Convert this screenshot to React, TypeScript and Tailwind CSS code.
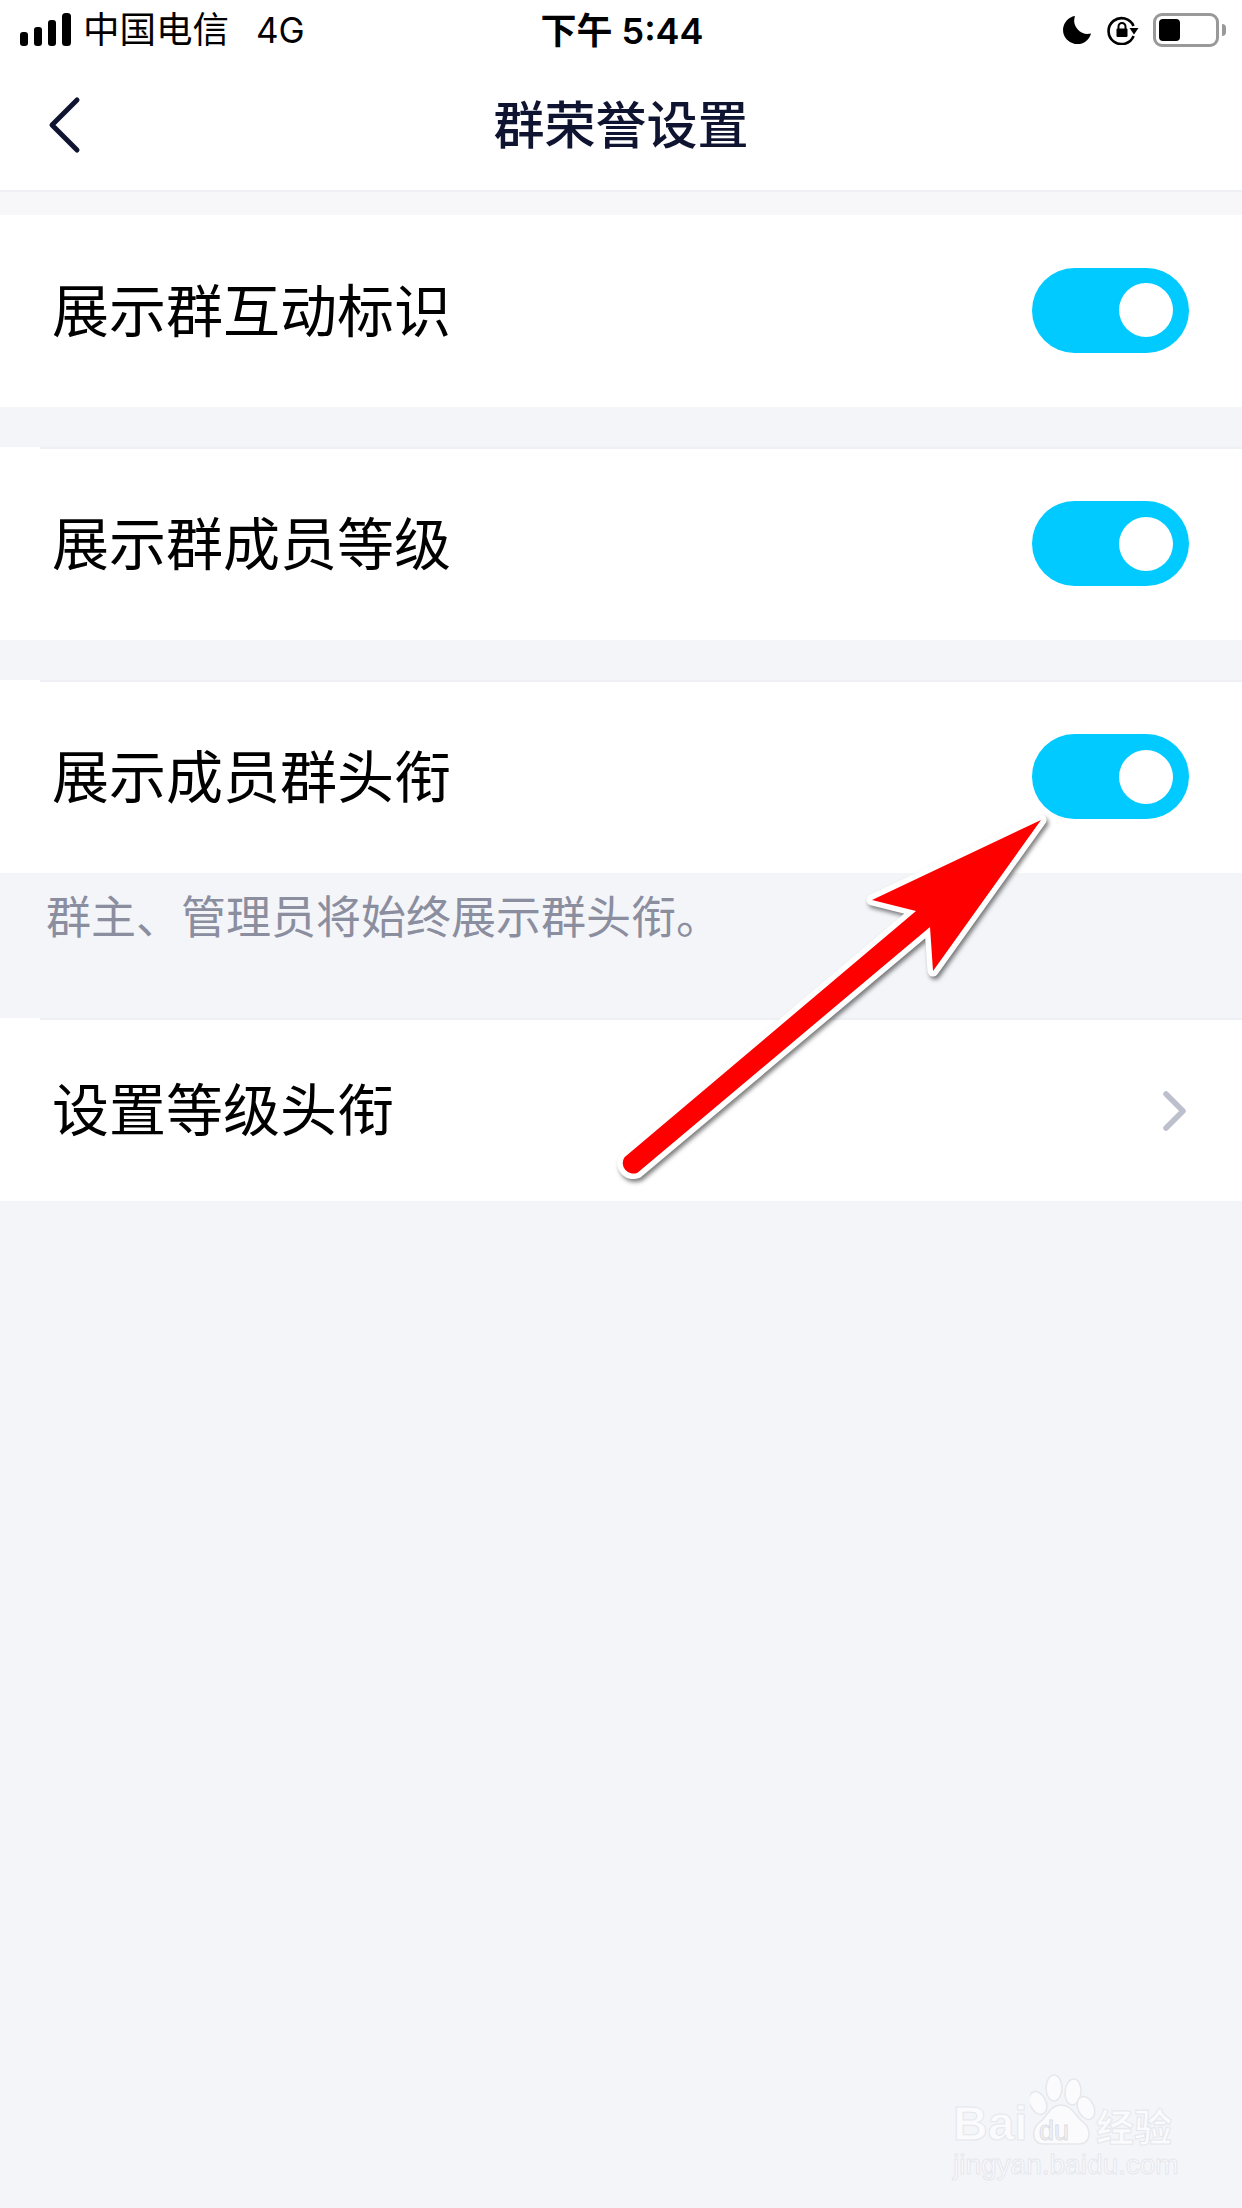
const fontStack = "font-['Inter','Noto_Sans_CJK_SC',sans-serif]";

const Toggle = () => (
  <div className="w-[157px] h-[85px] mb-[2px] rounded-full bg-[#00caff] flex items-center justify-end pr-[16px] shrink-0">
    <div className="w-[54px] h-[54px] rounded-full bg-white" />
  </div>
);

const Divider = () => <div className="ml-10 h-[2px] bg-[#eef0f6]" />;

const SignalBars = () => (
  <svg width="52" height="34" viewBox="0 0 52 34" className="shrink-0">
    <rect x="0" y="19" width="8" height="14" rx="3" fill="#000" />
    <rect x="14" y="14" width="8" height="19" rx="3" fill="#000" />
    <rect x="28" y="7" width="8" height="26" rx="3" fill="#000" />
    <rect x="42" y="0" width="9" height="33" rx="3.5" fill="#000" />
  </svg>
);

const Moon = () => (
  <svg width="28" height="28" viewBox="0 0 28 28">
    <path d="M12 0 A14.2 14.2 0 1 0 28 17.5 A13.5 13.5 0 0 1 12 0Z" fill="#000" />
  </svg>
);

const RotationLock = () => (
  <svg width="32" height="30" viewBox="0 0 32 30">
    <path d="M26.5 11 A13 13 0 1 0 26.6 21" fill="none" stroke="#000" strokeWidth="2.6" />
    <path d="M22.5 13 L31.5 13 L27 19.5Z" fill="#000" />
    <rect x="9.5" y="13.5" width="11" height="8.5" rx="1" fill="#000" />
    <path d="M11.5 14 V11.5 A3.5 3.5 0 0 1 18.5 11.5 V14" fill="none" stroke="#000" strokeWidth="2" />
  </svg>
);

const Battery = () => (
  <div className="flex items-center gap-[3px]">
    <div className="w-[66px] h-[34px] rounded-[9px] border-[3px] border-[#999999] p-[3px] flex">
      <div className="w-[21px] h-full rounded-[4px] bg-black" />
    </div>
    <div className="w-[4px] h-[12px] rounded-r-full bg-[#999999]" />
  </div>
);

const StatusBar = () => (
  <div className="h-[60px] pl-[20px] pr-[16px] grid grid-cols-[1fr_auto_1fr] items-center">
    <div className="flex items-center">
      <SignalBars />
      <span className="ml-[11px] text-[36.5px] leading-none text-black">中国电信</span>
      <span className="ml-[27px] text-[35px] leading-none text-black">4G</span>
    </div>
    <div className="pt-[2px] pr-[2px] text-[36px] leading-none font-semibold text-black">下午 5:44</div>
    <div className="flex items-center justify-end gap-[16px]">
      <Moon />
      <RotationLock />
      <div className="ml-[-2px]">
        <Battery />
      </div>
    </div>
  </div>
);

const NavBar = () => (
  <div className="h-[132px] relative flex items-center justify-center border-b-2 border-[#eef0f6]">
    <svg width="40" height="62" viewBox="0 0 40 62" className="absolute left-[42px] top-[34px]">
      <path d="M35 6 L10 31 L35 56" fill="none" stroke="#0f1430" strokeWidth="5" strokeLinecap="round" strokeLinejoin="round" />
    </svg>
    <h1 className="text-[51px] leading-none font-medium text-[#0f1430]">群荣誉设置</h1>
  </div>
);

const SettingRow = ({ label, top }: { label: string; top?: boolean }) => (
  <div className="bg-white">
    {top && <Divider />}
    <div className={`${top ? "h-[191px]" : "h-[192px]"} pl-[52px] pr-[53px] flex items-center justify-between`}>
      <span className="text-[57px] leading-none text-black">{label}</span>
      <Toggle />
    </div>
  </div>
);

const RedArrow = () => (
  <svg
    width="470"
    height="410"
    viewBox="600 790 470 410"
    className="absolute left-[600px] top-[790px] drop-shadow-[2px_3px_2px_rgba(0,0,0,0.5)]"
  >
    <path
      d="M1041 820 L872 900 L916 911 L624.5 1157.3 A10.5 10.5 0 0 0 637.5 1172.7 L930 927 L933 971 Z"
      fill="#ff0000"
      stroke="#ffffff"
      strokeWidth="11"
      strokeLinejoin="round"
      paintOrder="stroke"
    />
  </svg>
);

const Watermark = () => (
  <div className="absolute left-[950px] top-[2070px] w-[230px] h-[115px]">
    <svg width="70" height="80" viewBox="1030 2070 70 80" className="absolute left-[80px] top-0">
      <g fill="#fbfbfd" stroke="#e6e7ec" strokeWidth="1.5">
        <ellipse cx="1038" cy="2103" rx="8" ry="12" transform="rotate(-25 1038 2103)" />
        <ellipse cx="1054" cy="2088" rx="8" ry="13" />
        <ellipse cx="1073" cy="2092" rx="8" ry="13" transform="rotate(5 1073 2092)" />
        <ellipse cx="1086" cy="2108" rx="8" ry="12" transform="rotate(-25 1086 2108)" />
        <path d="M1061 2105 C1072 2105 1076 2117 1083 2122 C1092 2129 1091 2144 1079 2144 L1044 2144 C1031 2144 1031 2129 1040 2122 C1047 2117 1050 2105 1061 2105Z" />
      </g>
    </svg>
    <span className="absolute left-[3px] top-[26px] text-[48px] leading-[56px] font-bold font-['Liberation_Sans',sans-serif] text-[#fbfbfd] [-webkit-text-stroke:1px_#e6e7ec]">
      Bai
    </span>
    <span className="absolute left-[89px] top-[46px] text-[27px] leading-[30px] font-['Liberation_Sans',sans-serif] text-[#f4f5f9] [-webkit-text-stroke:1px_#dcdde3]">
      du
    </span>
    <span className="absolute left-[146px] top-[32px] text-[38px] leading-[50px] font-bold text-[#fbfbfd] [-webkit-text-stroke:1px_#e6e7ec]">
      经验
    </span>
    <span className="absolute left-[3px] top-[78px] text-[28px] leading-[34px] font-['Liberation_Sans',sans-serif] text-[#fbfbfd] [-webkit-text-stroke:1px_#e6e7ec]">
      jingyan.baidu.com
    </span>
  </div>
);

const App = () => {
  return (
    <div className={`relative w-[1242px] min-h-[2208px] bg-[#f4f5f9] overflow-hidden ${fontStack}`}>
      {/* Header */}
      <div className="bg-white">
        <StatusBar />
        <NavBar />
      </div>
      <div className="h-[23px] bg-[#f7f7f9]" />

      {/* Toggle rows */}
      <SettingRow label="展示群互动标识" />
      <div className="h-[40px]" />
      <SettingRow label="展示群成员等级" top />
      <div className="h-[40px]" />
      <SettingRow label="展示成员群头衔" top />

      {/* Hint */}
      <div className="h-[145px] pl-[46px] pt-[21px]">
        <p className="text-[45px] leading-[48px] text-[#8b8e9f]">群主、管理员将始终展示群头衔。</p>
      </div>

      {/* Link row */}
      <div className="bg-white">
        <Divider />
        <div className="h-[181px] pl-[52px] pr-[53px] flex items-center justify-between">
          <span className="text-[57px] leading-none text-black">设置等级头衔</span>
          <svg width="28" height="44" viewBox="0 0 28 44" className="shrink-0">
            <path d="M5 5 L22 22 L5 39" fill="none" stroke="#bcbfcc" strokeWidth="5.5" strokeLinecap="round" strokeLinejoin="round" />
          </svg>
        </div>
      </div>

      <RedArrow />
      <Watermark />
    </div>
  );
};

export default App;
